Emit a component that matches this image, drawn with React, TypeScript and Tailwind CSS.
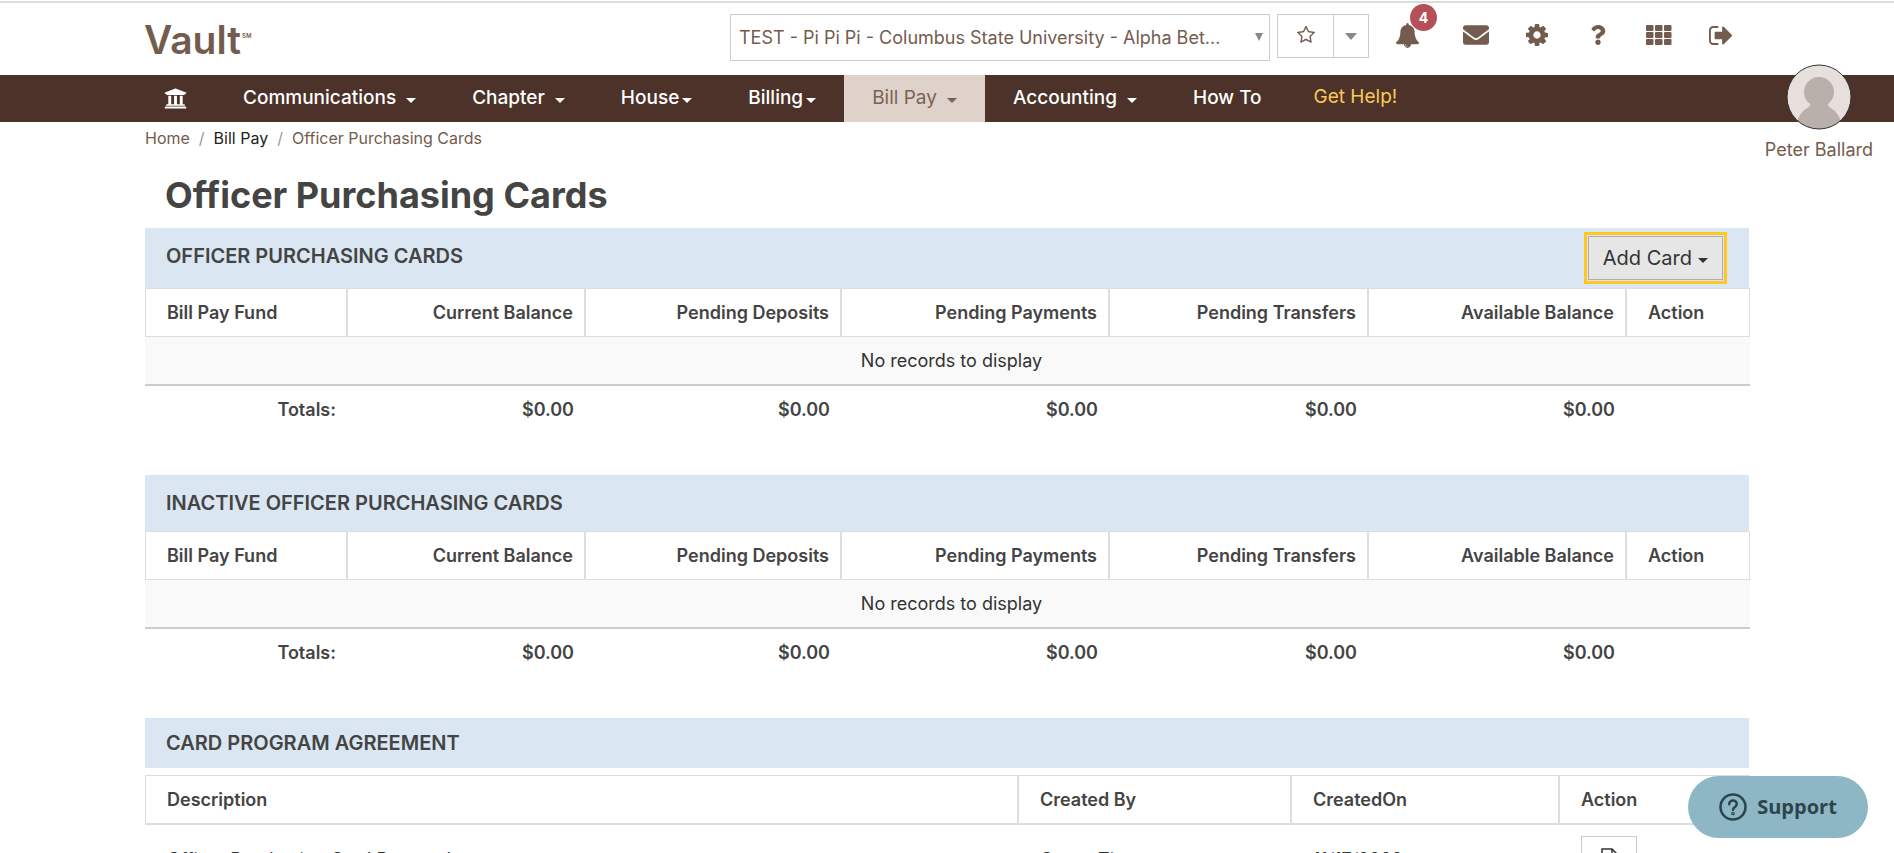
import type { ReactNode } from 'react';
import { FaEnvelope, FaQuestion, FaUniversity } from 'react-icons/fa';
import clsx from 'clsx';

const navItems = [
  { label: 'Communications', caret: true },
  { label: 'Chapter', caret: true },
  { label: 'House', caret: true, tight: true },
  { label: 'Billing', caret: true, tight: true },
  { label: 'Bill Pay', caret: true, active: true },
  { label: 'Accounting', caret: true },
  { label: 'How To' },
];

const fundColumns = [
  { label: 'Bill Pay Fund', width: 'w-[202px]' },
  { label: 'Current Balance', width: 'w-[238px]', amount: true },
  { label: 'Pending Deposits', width: 'w-[256px]', amount: true },
  { label: 'Pending Payments', width: 'w-[268px]', amount: true },
  { label: 'Pending Transfers', width: 'w-[259px]', amount: true },
  { label: 'Available Balance', width: 'w-[258px]', amount: true },
  { label: 'Action', width: 'w-[124px]' },
];

const agreementColumns = [
  { label: 'Description', width: 'w-[873px]' },
  { label: 'Created By', width: 'w-[273px]' },
  { label: 'CreatedOn', width: 'w-[268px]' },
  { label: 'Action', width: 'w-[191px]' },
];

function Caret({ className }: { className?: string }) {
  return (
    <svg viewBox="0 0 10 5" className={clsx('inline-block h-[5px] w-[10px] fill-current', className)} aria-hidden="true">
      <path d="M0 0h10L5 5z" />
    </svg>
  );
}

function StarIcon() {
  return (
    <svg viewBox="64 64 1664 1664" className="size-[18px] fill-current" aria-hidden="true">
      <path d="M1201 1004l306-297-422-62-189-382-189 382-422 62 306 297-73 421 378-199 377 199zm527-357q0 22-26 48l-363 354 86 500q1 7 1 20 0 50-41 50-19 0-40-12l-449-236-449 236q-22 12-40 12-21 0-31.500-14.500t-10.500-35.500q0-6 2-20l86-500-364-354q-25-27-25-48 0-37 56-46l502-73 225-455q19-41 49-41t49 41l225 455 502 73q56 9 56 46z" />
    </svg>
  );
}

function BellIcon() {
  return (
    <svg viewBox="64 0 1664 1792" className="h-[25px] w-[23px] fill-current" aria-hidden="true">
      <path d="M912 1696q0-16-16-16-59 0-101.500-42.500t-42.500-101.500q0-16-16-16t-16 16q0 73 51.500 124.500t124.500 51.500q16 0 16-16zm816-288q0 52-38 90t-90 38h-448q0 106-75 181t-181 75-181-75-75-181h-448q-52 0-90-38t-38-90q50-42 91-88t85-119.500 74.500-158.500 50-206 19.500-260q0-152 117-282.500t307-158.500q-8-19-8-39 0-40 28-68t68-28 68 28 28 68q0 20-8 39 190 28 307 158.500t117 282.500q0 139 19.500 260t50 206 74.500 158.500 85 119.500 91 88z" />
    </svg>
  );
}

function CogIcon() {
  return (
    <svg viewBox="128 128 1536 1536" className="size-[22px] fill-current" aria-hidden="true">
      <path d="M1152 896q0-106-75-181t-181-75-181 75-75 181 75 181 181 75 181-75 75-181zm512-109v222q0 12-8 23t-20 13l-185 28q-19 54-39 91 35 50 107 138 10 12 10 25t-9 23q-27 37-99 108t-94 71q-12 0-26-9l-138-108q-44 23-91 38-16 136-29 186-7 28-36 28h-222q-14 0-24.500-8.500t-11.500-21.500l-28-184q-49-16-90-37l-141 107q-10 9-25 9-14 0-25-11-126-114-165-168-7-10-7-23 0-12 8-23 15-21 51-66.500t54-70.500q-27-50-41-99l-183-27q-13-2-21-12.500t-8-23.500v-222q0-12 8-23t19-13l186-28q14-46 39-92-40-57-107-138-10-12-10-24 0-10 9-23 26-36 98.500-107.500t94.500-71.500q13 0 26 10l138 107q44-23 91-38 16-136 29-186 7-28 36-28h222q14 0 24.500 8.500t11.500 21.500l28 184q49 16 90 37l142-107q9-9 24-9 13 0 25 10 129 119 165 170 7 8 7 22 0 12-8 23-15 21-51 66.500t-54 70.500q26 50 41 98l183 28q13 2 21 12.500t8 23.500z" />
    </svg>
  );
}

function GridIcon() {
  return (
    <svg viewBox="0 0 26 20" className="h-5 w-[26px] fill-current" aria-hidden="true">
      {[0, 7, 14].map((y) => [0, 9, 18].map((x) => <rect key={`${x}-${y}`} x={x} y={y} width="7.500" height="6" rx="1" />))}
    </svg>
  );
}

function SignOutIcon() {
  return (
    <svg viewBox="64 256 1568 1280" className="h-[19px] w-[23px] fill-current" aria-hidden="true">
      <path d="M704 1440q0 4 1 20t.5 26.500-3 23.500-10 19.500-20.500 6.500h-320q-119 0-203.500-84.500t-84.500-203.500v-704q0-119 84.500-203.500t203.500-84.500h320q13 0 22.500 9.500t9.500 22.500q0 4 1 20t.5 26.500-3 23.500-10 19.500-20.500 6.500h-320q-66 0-113 47t-47 113v704q0 66 47 113t113 47h312l11.500 1 11.500 3 8 5.500 7 9 2 13.500zm928-544q0 26-19 45l-544 544q-19 19-45 19t-45-19-19-45v-288h-448q-26 0-45-19t-19-45v-384q0-26 19-45t45-19h448v-288q0-26 19-45t45-19 45 19l544 544q19 19 19 45z" />
    </svg>
  );
}

function FileIcon() {
  return (
    <svg viewBox="0 0 17 20" className="h-5 w-[17px]" fill="none" stroke="currentColor" strokeWidth="1.500" aria-hidden="true">
      <path d="M1 1h10l5 5v13H1zM11 1v5h5" />
    </svg>
  );
}

function IconButton({ label, className, children }: { label: string; className?: string; children: ReactNode }) {
  return (
    <button type="button" aria-label={label} className={clsx('relative flex h-6 w-[26px] items-center justify-center', className)}>
      {children}
    </button>
  );
}

function Header() {
  return (
    <header className="flex h-[75px] items-start justify-between pr-[161px] pl-[144px] text-[#735c4e]">
      <a href="#" className="flex items-start pt-3 text-[39px] leading-[56px] font-semibold">
        Vault<span className="pt-4 pl-px text-[6px] leading-4">SM</span>
      </a>
      <div className="flex items-start pt-[14px]">
        <div className="relative">
          <select
            aria-label="Chapter"
            className="h-[47px] w-[540px] appearance-none truncate border border-[#ccc] bg-white pr-8 pl-2 text-lg"
          >
            <option>TEST - Pi Pi Pi - Columbus State University - Alpha Bet...</option>
          </select>
          <svg viewBox="0 0 8 8" className="pointer-events-none absolute top-[19px] right-[7px] size-2 fill-[#888]" aria-hidden="true">
            <path d="M0 0h8L4 8z" />
          </svg>
        </div>
        <div className="ml-[7px] flex h-11 border border-[#ccc]">
          <button type="button" aria-label="Favorite" className="flex w-14 items-center justify-center border-r border-[#ccc] pb-[2px]">
            <StarIcon />
          </button>
          <button type="button" aria-label="Favorites list" className="flex w-[34px] items-center justify-center text-[#888]">
            <svg viewBox="0 0 12 7" className="h-[7px] w-3 fill-current" aria-hidden="true">
              <path d="M0 0h12L6 7z" />
            </svg>
          </button>
        </div>
        <div className="ml-[25px] flex gap-[35px] pt-[9px]">
          <IconButton label="Notifications" className="mr-2">
            <BellIcon />
            <span className="absolute -top-[19px] left-4 flex size-[27px] items-center justify-center rounded-full bg-[#b3505a] text-sm font-bold text-white">4</span>
          </IconButton>
          <IconButton label="Messages"><FaEnvelope size={26} /></IconButton>
          <IconButton label="Settings"><CogIcon /></IconButton>
          <IconButton label="Help"><FaQuestion size={20} /></IconButton>
          <IconButton label="Apps"><GridIcon /></IconButton>
          <IconButton label="Sign out"><SignOutIcon /></IconButton>
        </div>
      </div>
    </header>
  );
}

function NavBar() {
  return (
    <nav className="relative flex h-[47px] bg-[#4c3228] pl-[136px] text-[19px] font-medium text-white">
      <a href="#" aria-label="Home" className="flex items-center px-7">
        <FaUniversity size={23} />
      </a>
      {navItems.map(({ label, caret, tight, active }) => (
        <a
          key={label}
          href="#"
          className={clsx('flex items-center px-7', active && 'bg-[#dfd2ca] font-normal text-[#7a6355]')}
        >
          {label}
          {caret && <Caret className={tight ? 'mt-1 ml-[3px]' : 'mt-1 ml-[10px]'} />}
        </a>
      ))}
      <a href="#" className="flex items-center px-6 pb-[2px] font-normal text-[#fbc958]">Get Help!</a>
      <a href="#" className="absolute -top-[11px] right-[21px] flex flex-col items-center text-lg font-normal text-[#735c4e]">
        <svg viewBox="0 0 66 66" className="size-[66px]" aria-hidden="true">
          <clipPath id="avatar"><circle cx="33" cy="33" r="32" /></clipPath>
          <circle cx="33" cy="33" r="32" fill="#e6dfdc" />
          <g fill="#b9afab" clipPath="url(#avatar)">
            <circle cx="33" cy="28" r="15" />
            <path d="M33 41c13 0 23 9 23 26H10c0-17 10-26 23-26z" />
            <path d="M26 38h14l4 6H22z" />
          </g>
          <circle cx="33" cy="33" r="32" fill="none" stroke="#333" />
        </svg>
        <span className="pt-[6px]">Peter Ballard</span>
      </a>
    </nav>
  );
}

function FundTable({ title, action, tall }: { title: string; action?: ReactNode; tall?: boolean }) {
  return (
    <section className="mb-[41px]">
      <div className={clsx('flex justify-between bg-[#dae7f2] pr-[26px] pl-[21px]', tall ? 'h-[60px]' : 'h-14')}>
        <h2 className="text-xl leading-[56px] font-semibold">{title}</h2>
        {action}
      </div>
      <table className="w-full table-fixed border-separate border-spacing-0 text-lg">
        <thead>
          <tr className="h-[49px]">
            {fundColumns.map(({ label, width, amount }) => (
              <th
                key={label}
                className={clsx('border border-[#ddd] pr-[11px] pl-[21px] font-semibold whitespace-nowrap', width, amount ? 'text-right' : 'text-left')}
              >
                {label}
              </th>
            ))}
          </tr>
        </thead>
        <tbody>
          <tr className="h-[49px] bg-[#f9f9f9]">
            <td colSpan={7} className="border-b-2 border-[#ccc] pl-2 text-center text-[#333]">No records to display</td>
          </tr>
        </tbody>
        <tfoot>
          <tr className="h-12 font-semibold">
            {fundColumns.map(({ label, amount }, i) => (
              <td key={label} className="pr-[11px] text-right">
                {i === 0 ? 'Totals:' : amount ? '$0.00' : ''}
              </td>
            ))}
          </tr>
        </tfoot>
      </table>
    </section>
  );
}

function AgreementTable() {
  return (
    <section>
      <h2 className="mb-[7px] bg-[#dae7f2] px-[21px] text-xl leading-[50px] font-semibold">CARD PROGRAM AGREEMENT</h2>
      <table className="w-full table-fixed border-separate border-spacing-0 text-lg">
        <thead>
          <tr className="h-[50px]">
            {agreementColumns.map(({ label, width }) => (
              <th key={label} className={clsx('border border-b-2 border-[#ddd] px-[21px] text-left font-semibold', width)}>
                {label}
              </th>
            ))}
          </tr>
        </thead>
        <tbody>
          <tr className="h-[66px] text-[#333]">
            <td className="px-[22px] pt-1">Officer Purchasing Card Proposal</td>
            <td className="px-[22px] pt-1">Casey Timm</td>
            <td className="px-[22px] pt-1">11/17/2022</td>
            <td className="px-[22px]">
              <button type="button" aria-label="View document" className="flex h-11 w-14 items-center justify-center border border-[#ccc]">
                <FileIcon />
              </button>
            </td>
          </tr>
        </tbody>
      </table>
    </section>
  );
}

export default function App() {
  return (
    <div className="bg-white pt-px font-['Inter',sans-serif] text-[#444]">
      <div className="-mb-[3px] h-[2px] bg-[#dcdedd]" />
      <Header />
      <NavBar />
      <main className="px-[145px]">
        <ol className="flex gap-[9px] pt-1 text-base text-[#735c4e]">
          <li><a href="#">Home</a></li>
          <li className="text-[#999]">/</li>
          <li><a href="#" className="text-[#222]">Bill Pay</a></li>
          <li className="text-[#999]">/</li>
          <li>Officer Purchasing Cards</li>
        </ol>
        <h1 className="px-5 pt-[22px] pb-[10px] text-4xl leading-[46px] font-bold">Officer Purchasing Cards</h1>
        <FundTable
          title="OFFICER PURCHASING CARDS"
          tall
          action={
            <button
              type="button"
              className="mt-2 flex h-11 items-center border border-[#adadad] bg-[#e6e6e6] px-[14px] text-xl text-[#333] outline-3 outline-offset-1 outline-[#ffc71f]"
            >
              Add Card
              <Caret className="mt-1 ml-[6px]" />
            </button>
          }
        />
        <FundTable title="INACTIVE OFFICER PURCHASING CARDS" />
        <AgreementTable />
      </main>
      <button
        type="button"
        className="fixed right-[26px] bottom-[15px] flex h-[62px] w-[180px] items-center justify-center gap-[10px] rounded-full bg-[#8db7c5] font-['Open_Sans',sans-serif] text-xl font-bold text-[#2d444c]"
      >
        <svg viewBox="0 0 28 28" className="size-7" fill="none" stroke="currentColor" strokeWidth="2.500" strokeLinecap="round" aria-hidden="true">
          <circle cx="14" cy="14" r="12.500" />
          <path d="M10.200 11.300c0-2.200 1.600-3.800 3.800-3.800s3.800 1.500 3.800 3.500c0 3-3.800 2.800-3.800 5.800" />
          <circle cx="14" cy="20.500" r="0.600" />
        </svg>
        Support
      </button>
    </div>
  );
}
